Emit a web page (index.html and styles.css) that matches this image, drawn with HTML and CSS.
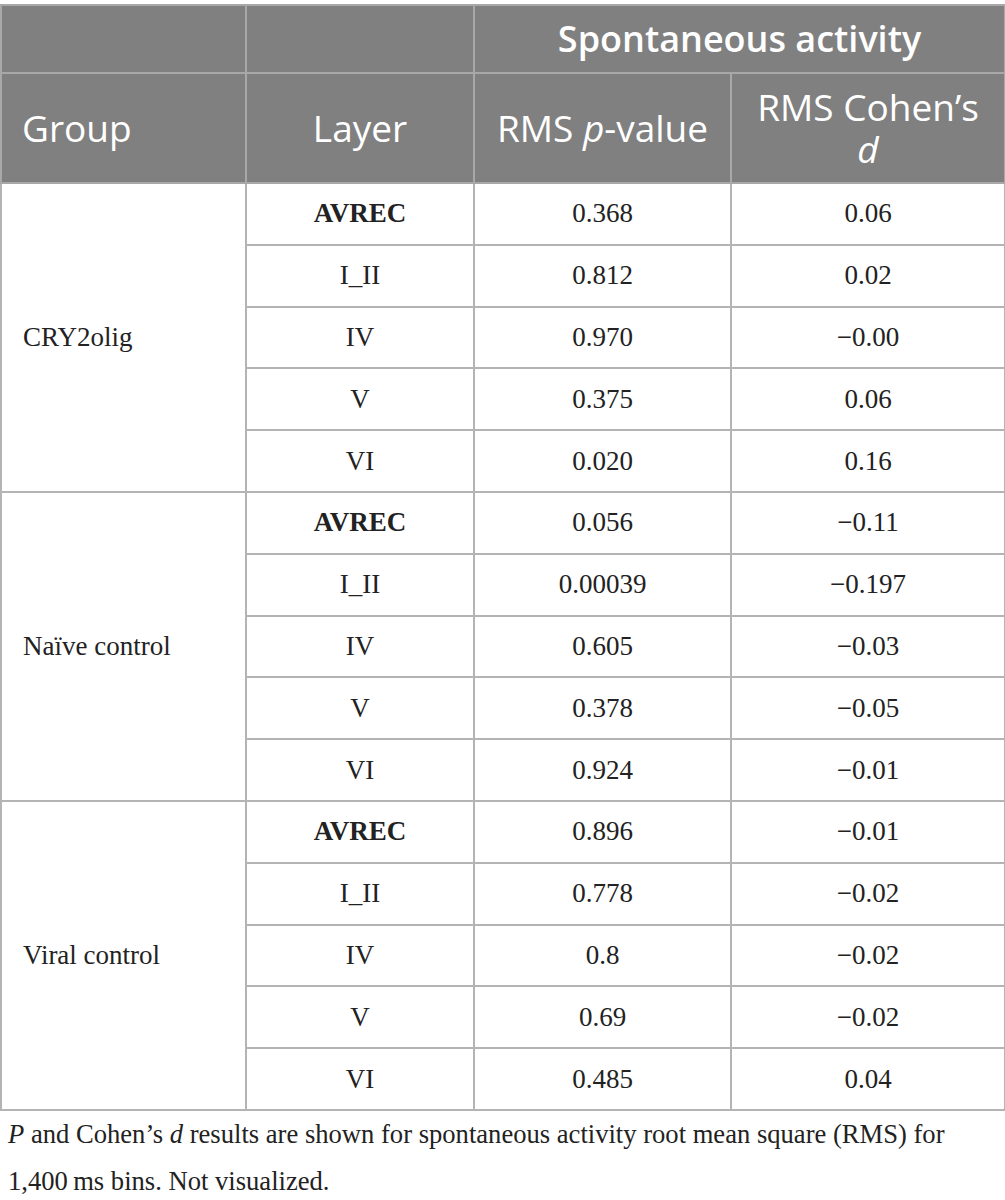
FILE: index.html
```
<!DOCTYPE html>
<html lang="en">
<head>
    <meta charset="UTF-8">
    <meta name="viewport" content="width=device-width, initial-scale=1.0">
    <title>Spontaneous activity RMS</title>

    <link rel="stylesheet" href="styles.css">
</head>
<body>

    <div class="wrap">
        <table class="tabela">
            <colgroup>
                <col class="c1">
                <col class="c2">
                <col class="c3">
                <col class="c4">
            </colgroup>
            <thead>
                <tr class="h1">
                    <th></th>
                    <th></th>
                    <th colspan="2" class="span">Spontaneous activity</th>
                </tr>
                <tr class="h2">
                    <th class="left">Group</th>
                    <th>Layer</th>
                    <th>RMS <i>p</i>-value</th>
                    <th>RMS Cohen’s <i>d</i></th>
                </tr>
            </thead>
            <tbody>
                <tr>
                    <td rowspan="5" class="grupo">CRY2olig</td>
                    <td><b>AVREC</b></td><td>0.368</td><td>0.06</td>
                </tr>
                <tr><td>I_II</td><td>0.812</td><td>0.02</td></tr>
                <tr><td>IV</td><td>0.970</td><td>−0.00</td></tr>
                <tr><td>V</td><td>0.375</td><td>0.06</td></tr>
                <tr><td>VI</td><td>0.020</td><td>0.16</td></tr>

                <tr>
                    <td rowspan="5" class="grupo">Naïve control</td>
                    <td><b>AVREC</b></td><td>0.056</td><td>−0.11</td>
                </tr>
                <tr><td>I_II</td><td>0.00039</td><td>−0.197</td></tr>
                <tr><td>IV</td><td>0.605</td><td>−0.03</td></tr>
                <tr><td>V</td><td>0.378</td><td>−0.05</td></tr>
                <tr><td>VI</td><td>0.924</td><td>−0.01</td></tr>

                <tr>
                    <td rowspan="5" class="grupo">Viral control</td>
                    <td><b>AVREC</b></td><td>0.896</td><td>−0.01</td>
                </tr>
                <tr><td>I_II</td><td>0.778</td><td>−0.02</td></tr>
                <tr><td>IV</td><td>0.8</td><td>−0.02</td></tr>
                <tr><td>V</td><td>0.69</td><td>−0.02</td></tr>
                <tr><td>VI</td><td>0.485</td><td>0.04</td></tr>
            </tbody>
        </table>

        <p class="nota"><i>P</i> and Cohen’s <i>d</i> results are shown for spontaneous activity root mean square (RMS) for 1,400&#8201;ms bins. Not visualized.</p>
    </div>

</body>
</html>
```

FILE: styles.css
```
body{
    margin: 0;
    background-color: white;
}

.wrap{
    padding-top: 4px;
}

.tabela{
    width: 1004px;
    border-collapse: collapse;
    table-layout: fixed;
    font-family: "Liberation Serif", serif;
    font-size: 27px;
    color: #222;
}

.c1{ width: 245px; }
.c2{ width: 228px; }
.c3{ width: 257px; }
.c4{ width: 274px; }

th, td{
    border: 2px solid #b4b4b4;
    text-align: center;
    vertical-align: middle;
}

th{
    background-color: #808080;
    color: white;
    font-family: "Open Sans", sans-serif;
    font-weight: normal;
    font-size: 37px;
    line-height: 42px;
    padding: 0 20px;
    border-color: #a8a8a8;
}

.h1 th{
    height: 66px;
}

.h1 .span{
    font-weight: 600;
    font-size: 36px;
}

.h2 th{
    height: 108px;
}

th.left{
    text-align: left;
}

td{
    height: 59.8px;
    padding: 0;
}

td.grupo{
    text-align: left;
    padding-left: 21px;
}

td b{
    font-weight: bold;
}

.nota{
    font-family: "Liberation Serif", serif;
    font-size: 26.6px;
    line-height: 47px;
    color: #222;
    margin: 0 0 0 8px;
    width: 960px;
}
```
